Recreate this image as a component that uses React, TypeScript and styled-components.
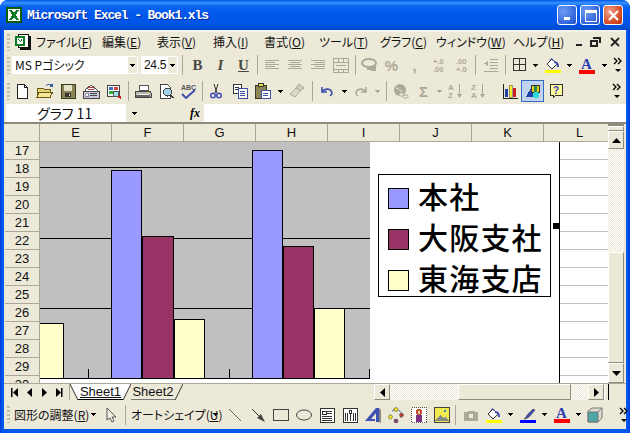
import React from "react";
import styled, { createGlobalStyle } from "styled-components";

const GlobalStyle = createGlobalStyle`
  html, body { margin: 0; padding: 0; background: #fff; }
  body { width: 630px; height: 433px; overflow: hidden; }
`;

const JP = `"Noto Sans CJK JP", "Liberation Sans", sans-serif`;
const FACE = "#ece9d8";
const LINE = "#aca899";
const OFF = "#aca899";

const Window = styled.div`
  width: 630px;
  height: 433px;
  box-sizing: border-box;
  display: flex;
  flex-direction: column;
  padding: 0 4px 4px;
  background: linear-gradient(90deg, #0831d9 0, #0058ee 2px, #0058ee 628px, #0831d9 630px);
  border-radius: 8px 8px 0 0;
  overflow: hidden;
  font-family: ${JP};
  font-feature-settings: "palt";
`;

const TitleBar = styled.div`
  height: 30px;
  margin: 0 -4px;
  padding: 0 7px 0 6px;
  flex: none;
  display: flex;
  align-items: center;
  background: linear-gradient(180deg, #0058e6 0, #3a93ff 3px, #0a65f0 6px, #0058ee 14px, #0055e5 24px, #0048c8 30px);
`;

const TitleText = styled.div`
  margin-left: 5px;
  flex: 1;
  color: #fff;
  font: bold 13px "Liberation Mono", monospace;
  letter-spacing: -1.1px;
  text-shadow: 1px 1px 0 #0f2f9a;
`;

const Caption = styled.div<{ $close?: boolean }>`
  width: 20px;
  height: 20px;
  margin-left: 3px;
  border: 1px solid #fff;
  border-radius: 3px;
  box-sizing: border-box;
  display: flex;
  align-items: center;
  justify-content: center;
  background: ${(p) =>
    p.$close
      ? "radial-gradient(circle at 30% 30%, #f0a088, #d8502c 60%, #b83010)"
      : "radial-gradient(circle at 30% 30%, #6f9cf5, #3a6de0 60%, #1f4fc8)"};
`;

const MenuBar = styled.div`
  height: 22px;
  flex: none;
  display: flex;
  align-items: center;
  background: ${FACE};
  border-top: 2px solid #f4f2e8;
  box-sizing: border-box;
  padding-left: 3px;
`;

const Grip = styled.span`
  width: 3px;
  height: 17px;
  flex: none;
  background: repeating-linear-gradient(180deg, #c1bda9 0 2px, transparent 2px 4px);
`;

const MenuItem = styled.span<{ $w: number }>`
  width: ${(p) => p.$w}px;
  flex: none;
  font-size: 12px;
  line-height: 16px;
  color: #111;
  white-space: nowrap;
  u { text-decoration: underline; }
`;

const DocControls = styled.span`
  margin-left: 16px;
  display: flex;
  gap: 3px;
  align-items: center;
  svg:last-child { margin-left: 4px; }
`;

const Toolbar = styled.div<{ $h: number }>`
  height: ${(p) => p.$h}px;
  flex: none;
  display: flex;
  align-items: center;
  background: ${FACE};
  padding-left: 3px;
  box-sizing: border-box;
`;

const Slot = styled.span<{ $w?: number; $hot?: boolean }>`
  width: ${(p) => p.$w ?? 23}px;
  height: 22px;
  flex: none;
  display: flex;
  align-items: center;
  justify-content: center;
  box-sizing: border-box;
  ${(p) => (p.$hot ? "background:#c1d2ee;border:1px solid #316ac5;" : "")}
`;

const Sep = styled.span<{ $l?: number; $r?: number }>`
  width: 1px;
  height: 20px;
  flex: none;
  background: ${LINE};
  margin-left: ${(p) => p.$l ?? 2}px;
  margin-right: ${(p) => p.$r ?? 2}px;
`;

const Combo = styled.div<{ $w: number; $l: number; $latin?: boolean }>`
  width: ${(p) => p.$w}px;
  height: 18px;
  margin-left: ${(p) => p.$l}px;
  flex: none;
  display: flex;
  background: #fff;
  box-sizing: border-box;
  font-size: 12px;
  line-height: 18px;
  color: #111;
  ${(p) => (p.$latin ? `font-family: "Liberation Sans", sans-serif; letter-spacing: -0.3px;` : "")}
`;

const ComboText = styled.span`
  flex: 1;
  padding-left: 3px;
  white-space: nowrap;
  overflow: hidden;
`;

const ComboArrow = styled.span`
  width: 11px;
  flex: none;
  background: ${FACE};
  border: 1px solid #fff;
  box-sizing: border-box;
  display: flex;
  align-items: center;
  justify-content: center;
`;

const StyleGlyph = styled.span<{ $i?: boolean; $u?: boolean }>`
  font: ${(p) => (p.$i ? "italic bold" : "bold")} 15px "Liberation Serif", serif;
  color: #4a4a44;
  text-decoration: ${(p) => (p.$u ? "underline" : "none")};
`;

const FormulaBar = styled.div`
  height: 20px;
  flex: none;
  display: flex;
  background: ${FACE};
  border-bottom: 2px solid #8f8b7c;
  box-sizing: border-box;
  padding-left: 2px;
`;

const NameBox = styled.div`
  width: 120px;
  background: #fff;
  font-size: 14px;
  line-height: 18px;
  padding-left: 31px;
  box-sizing: border-box;
  color: #111;
  white-space: nowrap;
`;

const NameDrop = styled.div`
  width: 78px;
  flex: none;
  display: flex;
  align-items: center;
  font: italic bold 12px "Liberation Serif", serif;
  padding-left: 6px;
  box-sizing: border-box;
  gap: 53px;
`;

const FormulaInput = styled.div`
  flex: 1;
  background: #fff;
`;

const Sheet = styled.div`
  height: 259px;
  flex: none;
  display: flex;
  background: ${FACE};
  padding-left: 1px;
`;

const GridArea = styled.div`
  width: 603px;
  flex: none;
  position: relative;
  overflow: hidden;
  background: #fff;
`;

const ColHeaders = styled.div`
  display: flex;
  height: 18px;
`;

const Corner = styled.div`
  width: 35px;
  flex: none;
  background: ${FACE};
  border-right: 1px solid ${LINE};
  border-bottom: 1px solid ${LINE};
  box-sizing: border-box;
`;

const ColHead = styled.div`
  width: 72px;
  flex: none;
  background: ${FACE};
  border-right: 1px solid ${LINE};
  border-bottom: 1px solid ${LINE};
  box-sizing: border-box;
  text-align: center;
  font: 13px/17px "Liberation Sans", sans-serif;
  color: #111;
`;

const Row = styled.div`
  display: flex;
  height: 18px;
  flex: none;
`;

const RowHead = styled.div`
  width: 35px;
  flex: none;
  background: ${FACE};
  border-right: 1px solid ${LINE};
  border-bottom: 1px solid ${LINE};
  box-sizing: border-box;
  text-align: center;
  font: 13px/18px "Liberation Sans", sans-serif;
  color: #111;
`;

const RowCells = styled.div`
  flex: 1;
  border-bottom: 1px solid #c0c0c0;
  box-sizing: border-box;
`;

const Chart = styled.div`
  position: absolute;
  left: 35px;
  top: 18px;
  width: 519px;
  height: 245px;
  background: #fff;
  border-right: 1px solid #000;
`;

const Legend = styled.div`
  position: absolute;
  left: 338px;
  top: 32px;
  width: 173px;
  height: 123px;
  border: 1px solid #000;
  box-sizing: border-box;
  background: #fff;
  padding: 3px 0 0 9px;
  display: flex;
  flex-direction: column;
  gap: 1px;
`;

const LegendRow = styled.div`
  height: 40px;
  display: flex;
  align-items: center;
  gap: 9px;
`;

const LegendLabel = styled.span`
  font-size: 30px;
  font-weight: 500;
  letter-spacing: 1.2px;
  color: #000;
  line-height: 34px;
  height: 40px;
  font-feature-settings: normal;
`;

const Swatch = styled.span<{ $c: string }>`
  width: 21px;
  height: 21px;
  flex: none;
  box-sizing: border-box;
  border: 1px solid #000;
  background: ${(p) => p.$c};
`;

const Handle = styled.span`
  position: absolute;
  right: 0;
  top: 81px;
  width: 6px;
  height: 6px;
  background: #000;
`;

const VScroll = styled.div`
  width: 16px;
  flex: none;
  display: flex;
  flex-direction: column;
  border-top: 2px solid #8f8b7c;
`;

const Dither = styled.div<{ $w?: number }>`
  flex: ${(p) => (p.$w ? "none" : 1)};
  width: ${(p) => (p.$w ? p.$w + "px" : "auto")};
  background: repeating-conic-gradient(#fdfcf8 0 25%, ${FACE} 0 50%) 0 0 / 2px 2px;
`;

const ScrollBtn = styled.div<{ $w?: number; $h?: number }>`
  width: ${(p) => (p.$w ? p.$w + "px" : "auto")};
  height: ${(p) => (p.$h ? p.$h + "px" : "auto")};
  flex: none;
  background: ${FACE};
  border: 1px solid;
  border-color: #fff #8f8b7c #8f8b7c #fff;
  box-sizing: border-box;
  display: flex;
  align-items: center;
  justify-content: center;
`;

const TabRow = styled.div`
  height: 17px;
  flex: none;
  display: flex;
  background: ${FACE};
  border-top: 1px solid ${LINE};
  box-sizing: border-box;
  padding-left: 2px;
`;

const TabNav = styled.div`
  width: 64px;
  flex: none;
  display: flex;
  align-items: center;
  justify-content: space-around;
  padding: 0 3px 0 2px;
  box-sizing: border-box;
  border-right: 1px solid ${LINE};
`;

const Tab = styled.div<{ $active?: boolean; $w: number }>`
  width: ${(p) => p.$w}px;
  flex: none;
  font: 13px/15px "Liberation Sans", sans-serif;
  color: #111;
  text-align: center;
  background: ${(p) => (p.$active ? "#fff" : FACE)};
  text-decoration: ${(p) => (p.$active ? "underline" : "none")};
  border-bottom: 1px solid ${(p) => (p.$active ? "#000" : "#777")};
  height: 16px;
  box-sizing: border-box;
`;

const TabFill = styled.div`
  width: 188px;
  flex: none;
`;

const Thumb = styled(ScrollBtn)`
  width: 113px;
`;

const HScroll = styled.div`
  display: flex;
  flex: none;
  width: 230px;
  margin-left: 3px;
`;

const Splitter = styled.div`
  width: 5px;
  flex: none;
  border-left: 1px solid #fff;
  border-right: 1px solid #000;
  box-sizing: border-box;
`;

const DrawLabel = styled.span<{ $w: number; $l?: number }>`
  width: ${(p) => p.$w}px;
  margin-left: ${(p) => p.$l ?? 0}px;
  flex: none;
  font-size: 12px;
  color: #111;
  white-space: nowrap;
`;

const Px: React.FC<{ w?: number; h?: number; smooth?: boolean; children: React.ReactNode }> = ({
  w = 16,
  h = 16,
  smooth,
  children,
}) => (
  <svg width={w} height={h} viewBox={`0 0 ${w} ${h}`} shapeRendering={smooth ? "auto" : "crispEdges"}>
    {children}
  </svg>
);

const Drop = () => (
  <Px w={5} h={3}>
    <path d="M0 0h5v1H4v1H3v1H2V2H1V1H0z" fill="#000" />
  </Px>
);

const Chevrons = () => (
  <svg width="9" height="16" viewBox="0 0 9 16">
    <path d="M1 1l3 3-3 3M5 1l3 3-3 3" fill="none" stroke="#000" strokeWidth="1.3" />
    <path d="M2 12h6l-3 3z" fill="#000" />
  </svg>
);

const Arrow: React.FC<{ dir: "l" | "r" | "u" | "d"; bar?: boolean }> = ({ dir, bar }) => {
  const paths = {
    l: "M7 0v9L2 4.5z",
    r: "M2 0v9l5-4.5z",
    u: "M0 7h9L4.5 2z",
    d: "M0 2h9L4.5 7z",
  };
  return (
    <svg width="9" height="9" viewBox="0 0 9 9">
      <path d={paths[dir]} fill="#000" />
      {bar && <rect x={dir === "l" ? 0 : 7} y="0" width="1.5" height="9" fill="#000" />}
    </svg>
  );
};

// the slanted sides of the sheet tabs
const TabEdge: React.FC<{ left: string; right: string; flip?: boolean }> = ({ left, right, flip }) => (
  <svg width="8" height="16" viewBox="0 0 8 16" style={{ flex: "none" }}>
    <rect width="8" height="16" fill={right} />
    <path d={flip ? "M0 16L8 0H0z" : "M0 0l8 16H0z"} fill={left} />
    <path d={flip ? "M0 16L8 0" : "M0 0l8 16"} stroke="#333" fill="none" />
  </svg>
);

const ExcelLogo = () => (
  <Px>
    <rect width="16" height="16" fill="#0b5c0b" />
    <rect x="2" y="2" width="12" height="12" fill="#fff" />
    <path d="M3 3h3l2 3 2-3h3l-3.5 5L13 13h-3L8 10l-2 3H3l3.5-5z" fill="#0b7a24" />
  </Px>
);

const DocIcon = () => (
  <Px w={18} h={16}>
    <path d="M4 0h11v2h2v14H6v-2H4z" fill="#111" />
    <path d="M5 1h9v12H5z" fill="#fff" />
    <rect x="1" y="2" width="10" height="10" fill="#0b7a24" />
    <rect x="3" y="4" width="6" height="6" fill="#fff" />
    <path d="M4 5h1v1h1v1H5zM7 5h1v2H7zM6 7h1v1H6z" fill="#0b7a24" />
  </Px>
);

const NewIcon = () => (
  <Px>
    <path d="M3 1h7l3 3v11H3z" fill="#fff" stroke="#222" />
    <path d="M10 1v3h3" fill="none" stroke="#222" />
  </Px>
);
const OpenIcon = () => (
  <Px w={18}>
    <path d="M1 5h6l1 1h6v8H1z" fill="#e8d47a" stroke="#6a5a10" />
    <path d="M3 9h14l-3 5H1z" fill="#f6e79a" stroke="#6a5a10" />
    <path d="M10 3c2-2 4-2 6 0" fill="none" stroke="#3f5f9f" />
    <path d="M15 1h2v3h-3z" fill="#3f5f9f" />
  </Px>
);
const SaveIcon = () => (
  <Px>
    <rect x="1" y="1" width="14" height="14" fill="#8a8456" stroke="#3a3a20" />
    <rect x="4" y="2" width="8" height="6" fill="#e6e2c8" />
    <rect x="5" y="10" width="6" height="4" fill="#333" />
    <rect x="9" y="11" width="1" height="2" fill="#ddd" />
  </Px>
);
const MailIcon = () => (
  <Px w={18}>
    <path d="M3 7l6-5 6 5v2H3z" fill="#fff" stroke="#555" />
    <path d="M6 4h6M6 6h6" stroke="#b04040" />
    <rect x="1" y="8" width="16" height="7" fill="#c8c8e0" stroke="#444" />
    <rect x="3" y="10" width="3" height="3" fill="#fff" stroke="#444" strokeWidth="0.5" />
    <path d="M8 10h7M8 12h7" stroke="#444" />
  </Px>
);
const SearchDocIcon = () => (
  <Px w={16}>
    <rect x="1" y="2" width="12" height="11" fill="#fff" stroke="#444" />
    <rect x="3" y="4" width="4" height="3" fill="#3c6cc4" />
    <rect x="8" y="4" width="4" height="3" fill="#c44" />
    <rect x="3" y="8" width="4" height="3" fill="#3a3" />
    <circle cx="10" cy="11" r="3" fill="#9fe0e8" stroke="#555" />
    <path d="M12 13l3 2" stroke="#c22" strokeWidth="2" />
  </Px>
);
const PrintIcon = () => (
  <Px w={18}>
    <path d="M5 2h9v5H5z" fill="#fff" stroke="#555" />
    <path d="M2 8h14l1 2v4H1v-4z" fill="#b8b8b0" stroke="#444" />
    <path d="M3 11h12" stroke="#eee" />
    <rect x="13" y="9" width="2" height="1" fill="#ee3" />
    <rect x="2" y="12" width="14" height="2" fill="#666" />
  </Px>
);
const PreviewIcon = () => (
  <Px>
    <path d="M2 1h7l3 3v11H2z" fill="#fff" stroke="#444" />
    <circle cx="9.5" cy="9" r="4" fill="#9fd4e8" stroke="#444" />
    <path d="M12.5 12l3 3" stroke="#333" strokeWidth="2" />
  </Px>
);
const SpellIcon = () => (
  <svg width="17" height="16" viewBox="0 0 17 16">
    <text x="1" y="7" fontFamily="Liberation Sans" fontSize="7" fontWeight="bold" fill="#555">ABC</text>
    <path d="M2 11l4 4 9-8" fill="none" stroke="#3f4fb0" strokeWidth="2" />
  </svg>
);
const CutIcon = () => (
  <Px smooth>
    <path d="M6 1l3 9M10 1L7 10" stroke="#333" fill="none" />
    <circle cx="5" cy="12.5" r="2.3" fill="none" stroke="#3f4fb0" strokeWidth="1.5" />
    <circle cx="11" cy="12.5" r="2.3" fill="none" stroke="#3f4fb0" strokeWidth="1.5" />
  </Px>
);
const CopyIcon = () => (
  <Px>
    <rect x="1" y="1" width="8" height="9" fill="#fff" stroke="#333" />
    <path d="M3 4h4M3 6h4" stroke="#333" />
    <rect x="6" y="5" width="9" height="10" fill="#fff" stroke="#3f4fa0" />
    <path d="M8 8h5M8 10h5M8 12h5" stroke="#3f4fa0" />
  </Px>
);
const PasteIcon = () => (
  <Px w={17}>
    <rect x="1" y="2" width="11" height="13" fill="#8a8456" stroke="#3a3a20" />
    <rect x="4" y="0" width="5" height="3" fill="#e6e040" stroke="#333" />
    <rect x="7" y="7" width="9" height="8" fill="#fff" stroke="#3f4fa0" />
    <path d="M9 10h5M9 12h5" stroke="#3f4fa0" />
  </Px>
);
const BrushIcon = () => (
  <Px w={17} smooth>
    <path d="M10 1l5 4-4 3-4-3z" fill="#cfcbb8" stroke={OFF} />
    <path d="M7 5l4 3-5 6-5-3z" fill="#dcd8c6" stroke={OFF} />
  </Px>
);
const UndoIcon = () => (
  <Px w={14} h={12} smooth>
    <path d="M2 2v5h5" fill="none" stroke="#3f4fb0" strokeWidth="1.6" />
    <path d="M2 7c3-4 9-4 10 1 0 1-1 2-2 3" fill="none" stroke="#3f4fb0" strokeWidth="1.6" />
  </Px>
);
const RedoIcon = () => (
  <Px w={14} h={12} smooth>
    <path d="M12 2v5H7" fill="none" stroke={OFF} strokeWidth="1.6" />
    <path d="M12 7C9 3 3 3 2 8c0 1 1 2 2 3" fill="none" stroke={OFF} strokeWidth="1.6" />
  </Px>
);
const GlobeIcon = () => (
  <Px smooth>
    <circle cx="7" cy="7" r="6" fill={OFF} />
    <path d="M3 5c3 0 3 3 5 3s1 3 0 4" stroke={FACE} fill="none" />
    <rect x="6" y="10" width="5" height="3" rx="1.5" fill={FACE} stroke={OFF} />
    <rect x="10" y="12" width="5" height="3" rx="1.5" fill={FACE} stroke={OFF} />
  </Px>
);
const DimText = styled.span<{ $size?: number; $c?: string }>`
  font: bold ${(p) => p.$size ?? 14}px "Liberation Sans", sans-serif;
  color: ${(p) => p.$c ?? OFF};
`;
const SortIcon: React.FC<{ top: string; bottom: string }> = ({ top, bottom }) => (
  <svg width="16" height="16" viewBox="0 0 16 16">
    <text x="0" y="7" fontFamily="Liberation Sans" fontWeight="bold" fontSize="8" fill={OFF}>{top}</text>
    <text x="0" y="15" fontFamily="Liberation Sans" fontWeight="bold" fontSize="8" fill={OFF}>{bottom}</text>
    <path d="M11 1h1v10h2l-2.5 4L9 11h2z" fill={OFF} />
  </svg>
);
const ChartIcon = () => (
  <Px>
    <path d="M1 1v14h15" fill="none" stroke="#222" />
    <rect x="3" y="6" width="3" height="8" fill="#223fae" />
    <rect x="7" y="2" width="3" height="12" fill="#ee3" stroke="#444" strokeWidth="0.5" />
    <rect x="11" y="5" width="3" height="9" fill="#c22" />
  </Px>
);
const WizardIcon = () => (
  <Px>
    <path d="M1 14L6 5h2v9z" fill="#2340a8" />
    <rect x="6" y="2" width="8" height="7" fill="#e8d020" stroke="#333" />
    <rect x="9" y="3" width="3" height="9" fill="#2a8a4a" />
    <circle cx="11" cy="12" r="3" fill="#30d8d8" />
  </Px>
);
const HelpIcon = () => (
  <svg width="16" height="16" viewBox="0 0 16 16">
    <path d="M2 1h12v11H8l-3 3v-3H2z" fill="#ffff99" stroke="#333" shapeRendering="crispEdges" />
    <text x="5" y="10.5" fontFamily="Liberation Sans" fontWeight="bold" fontSize="10" fill="#3a3ac0">?</text>
  </svg>
);
const AlignIcon: React.FC<{ mode: "l" | "c" | "r" }> = ({ mode }) => {
  const lines = [14, 10, 14, 10, 14];
  return (
    <Px h={12}>
      {lines.map((w, i) => (
        <rect
          key={i}
          x={mode === "l" ? 1 : mode === "c" ? 8 - w / 2 : 15 - w}
          y={i * 2 + 1}
          width={w}
          height="1"
          fill={OFF}
        />
      ))}
    </Px>
  );
};
const MergeIcon = () => (
  <Px h={15}>
    <rect x="0.5" y="0.5" width="15" height="14" fill="none" stroke={OFF} />
    <path d="M0 4h16M0 11h16M5 0v4M10 0v4M5 11v4M10 11v4" stroke={OFF} />
    <path d="M3 7h10" stroke={OFF} />
  </Px>
);
const MoneyIcon = () => (
  <Px w={16} h={15} smooth>
    <ellipse cx="8" cy="5" rx="7" ry="4" fill="none" stroke={OFF} strokeWidth="2" />
    <rect x="6" y="10" width="6" height="2" fill={OFF} />
    <rect x="10" y="8" width="5" height="5" fill={OFF} />
  </Px>
);
const DecIcon: React.FC<{ a: string; b: string }> = ({ a, b }) => (
  <svg width="16" height="16" viewBox="0 0 16 16">
    <text x="3" y="7" fontFamily="Liberation Sans" fontWeight="bold" fontSize="7.5" fill={OFF}>{a}</text>
    <text x="3" y="15" fontFamily="Liberation Sans" fontWeight="bold" fontSize="7.5" fill={OFF}>{b}</text>
  </svg>
);
const IndentIcon = () => (
  <Px>
    <path d="M7 2h8v1H7zM7 5h8v1H7zM7 8h8v1H7zM7 11h8v1H7zM1 14h14v1H1z" fill={OFF} />
    <path d="M5 4v5L1 6.5z" fill={OFF} />
  </Px>
);
const BordersIcon = () => (
  <Px>
    <rect x="1.5" y="1.5" width="12" height="12" fill="none" stroke="#333" />
    <path d="M7.5 1v12M1 7.5h12" stroke="#333" fill="none" />
  </Px>
);
const FillIcon: React.FC<{ bar: string }> = ({ bar }) => (
  <Px w={17} smooth>
    <path d="M3 7l5-5 5 5-5 5z" fill="#fff" stroke="#333" />
    <path d="M6 4c0-3 3-3 3 0" fill="none" stroke="#3f4fb0" />
    <path d="M10 5c3 0 4 2 4 5" stroke="#3f4fb0" strokeWidth="2" fill="none" />
    <rect x="1" y="13" width="16" height="3" fill={bar} />
  </Px>
);
const FontColorIcon: React.FC<{ bar: string }> = ({ bar }) => (
  <svg width="17" height="17" viewBox="0 0 17 17">
    <text x="8.5" y="12" textAnchor="middle" fontFamily="Liberation Serif" fontWeight="bold" fontSize="15" fill="#2b3fb0">A</text>
    <rect x="1" y="13" width="16" height="4" fill={bar} />
  </svg>
);
const LineColorIcon = () => (
  <Px w={17} smooth>
    <path d="M5 12c2-1 2-3 4-5l5-5 2 1-5 6c-2 2-4 3-6 3z" fill="#3f4fb0" stroke="#223" strokeWidth="0.5" />
    <rect x="1" y="13" width="16" height="4" fill="#0000ff" />
  </Px>
);
const PointerIcon = () => (
  <Px w={12}>
    <path d="M2 1v12l3-2 2 4 2-1-2-4h4z" fill="#f4f2e8" stroke="#555" shapeRendering="auto" />
  </Px>
);
const LineIcon = () => (
  <Px smooth>
    <path d="M2 2l12 12" stroke="#666" />
  </Px>
);
const ArrowLineIcon = () => (
  <Px smooth>
    <path d="M2 2l8 8" stroke="#333" />
    <path d="M7 11l4-4 4 8z" fill="#444" />
  </Px>
);
const RectIcon = () => (
  <Px>
    <rect x="0.5" y="2.5" width="15" height="11" fill="none" stroke="#444" />
  </Px>
);
const EllipseIcon = () => (
  <Px smooth>
    <ellipse cx="8" cy="8" rx="7.5" ry="5" fill="none" stroke="#444" />
  </Px>
);
const TextBoxIcon = () => (
  <Px>
    <rect x="1" y="1" width="14" height="14" fill="#fff" stroke="#333" />
    <path d="M3 4h4v3H3zM8 4h5M8 6h5M3 9h10M3 11h10M3 13h10" stroke="#333" fill="none" />
  </Px>
);
const VTextIcon = () => (
  <Px>
    <rect x="1" y="1" width="14" height="14" fill="#fff" stroke="#333" />
    <path d="M3 6v8M5 6v8M7 3h2v3H7zM8 7v7M11 6v8M13 6v8" stroke="#333" fill="none" />
  </Px>
);
const WordArtIcon = () => (
  <Px smooth>
    <path d="M0 14L11 1h3v14h-3V6l-5 6h4v2z" fill="#3d52b0" />
    <path d="M14 1l2 2v13l-2-1z" fill="#888" />
  </Px>
);
const DiagramIcon = () => (
  <Px smooth>
    <circle cx="8" cy="8" r="5.5" fill="none" stroke="#3f4fb0" strokeDasharray="3 4" />
    <circle cx="8" cy="2.5" r="2" fill="#f0e020" stroke="#444" strokeWidth="0.5" />
    <circle cx="2.5" cy="10" r="2" fill="#f0e020" stroke="#444" strokeWidth="0.5" />
    <circle cx="13.5" cy="8" r="2" fill="#c04040" stroke="#444" strokeWidth="0.5" />
    <circle cx="8" cy="14" r="2" fill="#804080" stroke="#444" strokeWidth="0.5" />
  </Px>
);
const ClipIcon = () => (
  <Px>
    <rect x="0.5" y="0.5" width="15" height="15" fill="#fff" stroke="#555" strokeDasharray="1 1" />
    <circle cx="8" cy="5" r="3" fill="#c05030" />
    <rect x="5" y="8" width="6" height="7" fill="#803080" />
    <rect x="7" y="4" width="2" height="3" fill="#f0c0a0" />
  </Px>
);
const PictureIcon = () => (
  <Px>
    <rect x="0.5" y="0.5" width="15" height="15" fill="#f0ec50" stroke="#444" />
    <path d="M1 14l5-6 3 3 2-2 4 5z" fill="#888" />
    <circle cx="11" cy="4" r="1.5" fill="#3f7fc0" />
  </Px>
);
const CameraIcon = () => (
  <Px h={12}>
    <path d="M1 3h3l1-1h6l1 1h3v9H1z" fill={OFF} />
    <circle cx="8" cy="7" r="2.5" fill={FACE} />
  </Px>
);
const BoxIcon = () => (
  <Px smooth>
    <path d="M1 4l4-3h10v10l-4 4H1z" fill="#dcdcd0" stroke="#777" />
    <path d="M1 5h10v10H1z" fill="#4ea5a5" stroke="#777" />
    <path d="M11 5l4-4" stroke="#777" />
  </Px>
);

const COLS = ["E", "F", "G", "H", "I", "J", "K", "L"];
const ROWS = Array.from({ length: 14 }, (_, i) => 17 + i);

// x, top, width of each bar (in chart pixels, bottom is the axis)
const BARS = [
  { x: -2, top: 181, w: 26, c: "#ffffcc" },
  { x: 71, top: 28, w: 31, c: "#9999ff" },
  { x: 102, top: 94, w: 32, c: "#993366" },
  { x: 134, top: 177, w: 31, c: "#ffffcc" },
  { x: 212, top: 8, w: 31, c: "#9999ff" },
  { x: 243, top: 104, w: 31, c: "#993366" },
  { x: 274, top: 166, w: 31, c: "#ffffcc" },
];
const AXIS = 236;

const Plot = () => (
  <svg width="330" height="245" viewBox="0 0 330 245" shapeRendering="crispEdges" style={{ display: "block" }}>
    <rect width="330" height={AXIS} fill="#c0c0c0" />
    {[25, 96, 166].map((y) => (
      <rect key={y} y={y} width="330" height="1" fill="#000" />
    ))}
    <rect x="48" y="227" width="1" height="9" fill="#000" />
    <rect x="189" y="227" width="1" height="9" fill="#000" />
    <rect x="329" y="227" width="1" height="9" fill="#000" />
    {BARS.map((b) => (
      <rect
        key={b.x}
        x={b.x + 0.5}
        y={b.top + 0.5}
        width={b.w - 1}
        height={AXIS - b.top}
        fill={b.c}
        stroke="#000"
      />
    ))}
    <rect y={AXIS} width="330" height="1" fill="#000" />
    <rect y={AXIS + 1} width="330" height="8" fill="#fff" />
  </svg>
);

const App = () => (
  <>
    <GlobalStyle />
    <Window>
      <TitleBar>
        <ExcelLogo />
        <TitleText>Microsoft Excel - Book1.xls</TitleText>
        <Caption>
          <Px w={9} h={9}>
            <rect x="1" y="6" width="6" height="3" fill="#fff" />
          </Px>
        </Caption>
        <Caption>
          <Px w={13} h={13}>
            <path d="M1 1h11v11H1z" fill="none" stroke="#fff" />
            <rect x="1" y="1" width="11" height="3" fill="#fff" />
          </Px>
        </Caption>
        <Caption $close>
          <svg width="13" height="13" viewBox="0 0 13 13">
            <path d="M2 2l9 9M11 2l-9 9" stroke="#fff" strokeWidth="2.2" />
          </svg>
        </Caption>
      </TitleBar>

      <MenuBar>
        <Grip />
        <Slot $w={26}>
          <DocIcon />
        </Slot>
        <MenuItem $w={66}>ファイル(<u>F</u>)</MenuItem>
        <MenuItem $w={55}>編集(<u>E</u>)</MenuItem>
        <MenuItem $w={56}>表示(<u>V</u>)</MenuItem>
        <MenuItem $w={51}>挿入(<u>I</u>)</MenuItem>
        <MenuItem $w={55}>書式(<u>O</u>)</MenuItem>
        <MenuItem $w={61}>ツール(<u>T</u>)</MenuItem>
        <MenuItem $w={56}>グラフ(<u>C</u>)</MenuItem>
        <MenuItem $w={77}>ウィンドウ(<u>W</u>)</MenuItem>
        <MenuItem $w={44}>ヘルプ(<u>H</u>)</MenuItem>
        <DocControls>
          <Px w={13} h={10}>
            <rect x="3" y="7" width="6" height="2" fill="#222" />
          </Px>
          <Px w={13} h={10}>
            <path d="M4 0h8v6h-2V2H4zM1 3h8v7H1zM3 5v3h4V5z" fill="#222" fillRule="evenodd" />
          </Px>
          <Px w={13} h={10} smooth>
            <path d="M2 1l8 8M10 1l-8 8" stroke="#222" strokeWidth="1.8" />
          </Px>
        </DocControls>
      </MenuBar>

      <Toolbar $h={26}>
        <Grip />
        <Combo $w={126} $l={2}>
          <ComboText>MS Pゴシック</ComboText>
          <ComboArrow>
            <Drop />
          </ComboArrow>
        </Combo>
        <Combo $w={37} $l={3} $latin>
          <ComboText>24.5</ComboText>
          <ComboArrow>
            <Drop />
          </ComboArrow>
        </Combo>
        <Sep $l={4} $r={3} />
        <Slot><StyleGlyph>B</StyleGlyph></Slot>
        <Slot><StyleGlyph $i>I</StyleGlyph></Slot>
        <Slot><StyleGlyph $u>U</StyleGlyph></Slot>
        <Sep $l={2} $r={2} />
        <Slot><AlignIcon mode="l" /></Slot>
        <Slot><AlignIcon mode="c" /></Slot>
        <Slot><AlignIcon mode="r" /></Slot>
        <Slot><MergeIcon /></Slot>
        <Sep $l={3} $r={1} />
        <Slot><MoneyIcon /></Slot>
        <Slot><DimText $size={15}>%</DimText></Slot>
        <Slot><DimText $size={15}>,</DimText></Slot>
        <Slot><DecIcon a="+.0" b=".00" /></Slot>
        <Slot><DecIcon a=".00" b="+.0" /></Slot>
        <Sep $l={3} $r={3} />
        <Slot><IndentIcon /></Slot>
        <Sep $l={3} $r={2} />
        <Slot><BordersIcon /></Slot>
        <Slot $w={9}><Drop /></Slot>
        <Slot $w={25}><FillIcon bar="#ffff00" /></Slot>
        <Slot $w={9}><Drop /></Slot>
        <Slot $w={24}><FontColorIcon bar="#ff0000" /></Slot>
        <Slot $w={12}><Drop /></Slot>
        <Slot $w={14}><Chevrons /></Slot>
      </Toolbar>

      <Toolbar $h={26}>
        <Grip />
        <Slot><NewIcon /></Slot>
        <Slot><OpenIcon /></Slot>
        <Slot><SaveIcon /></Slot>
        <Slot><MailIcon /></Slot>
        <Slot><SearchDocIcon /></Slot>
        <Sep $l={3} $r={2} />
        <Slot><PrintIcon /></Slot>
        <Slot><PreviewIcon /></Slot>
        <Slot><SpellIcon /></Slot>
        <Sep $l={2} $r={1} />
        <Slot $w={24}><CutIcon /></Slot>
        <Slot><CopyIcon /></Slot>
        <Slot><PasteIcon /></Slot>
        <Slot $w={12}><Drop /></Slot>
        <Slot><BrushIcon /></Slot>
        <Sep $l={3} $r={2} />
        <Slot $w={24}><UndoIcon /></Slot>
        <Slot $w={11}><Drop /></Slot>
        <Slot $w={22}><RedoIcon /></Slot>
        <Slot $w={11}>
          <Px w={5} h={3}><path d="M0 0h5v1H4v1H3v1H2V2H1V1H0z" fill={OFF} /></Px>
        </Slot>
        <Sep $l={3} $r={2} />
        <Slot><GlobeIcon /></Slot>
        <Slot><DimText $size={15}>Σ</DimText></Slot>
        <Slot $w={9}>
          <Px w={5} h={3}><path d="M0 0h5v1H4v1H3v1H2V2H1V1H0z" fill={OFF} /></Px>
        </Slot>
        <Slot><SortIcon top="A" bottom="Z" /></Slot>
        <Slot><SortIcon top="Z" bottom="A" /></Slot>
        <Slot $w={8} />
        <Slot><ChartIcon /></Slot>
        <Slot $hot><WizardIcon /></Slot>
        <Slot><HelpIcon /></Slot>
        <Slot $w={42} />
        <Slot $w={14}><Chevrons /></Slot>
      </Toolbar>

      <FormulaBar>
        <NameBox>グラフ 11</NameBox>
        <NameDrop>
          <Drop />
          <span>fx</span>
        </NameDrop>
        <FormulaInput />
      </FormulaBar>

      <Sheet>
        <GridArea>
          <ColHeaders>
            <Corner />
            {COLS.map((c) => (
              <ColHead key={c}>{c}</ColHead>
            ))}
          </ColHeaders>
          {ROWS.map((r) => (
            <Row key={r}>
              <RowHead>{r}</RowHead>
              <RowCells />
            </Row>
          ))}
          <Chart>
            <Plot />
            <Legend>
              <LegendRow>
                <Swatch $c="#9999ff" />
                <LegendLabel>本社</LegendLabel>
              </LegendRow>
              <LegendRow>
                <Swatch $c="#993366" />
                <LegendLabel>大阪支社</LegendLabel>
              </LegendRow>
              <LegendRow>
                <Swatch $c="#ffffcc" />
                <LegendLabel>東海支店</LegendLabel>
              </LegendRow>
            </Legend>
            <Handle />
          </Chart>
        </GridArea>
        <VScroll>
          <ScrollBtn $h={5} />
          <ScrollBtn $h={18}><Arrow dir="u" /></ScrollBtn>
          <Dither />
          <ScrollBtn $h={111} />
          <ScrollBtn $h={20}><Arrow dir="d" /></ScrollBtn>
        </VScroll>
      </Sheet>

      <TabRow>
        <TabNav>
          <Arrow dir="l" bar />
          <Arrow dir="l" />
          <Arrow dir="r" />
          <Arrow dir="r" bar />
        </TabNav>
        <TabEdge left={FACE} right="#fff" />
        <Tab $active $w={45}>Sheet1</Tab>
        <TabEdge left="#fff" right={FACE} flip />
        <Tab $w={44}>Sheet2</Tab>
        <TabEdge left={FACE} right={FACE} flip />
        <TabFill />
        <HScroll>
          <ScrollBtn $w={16}><Arrow dir="l" /></ScrollBtn>
          <Dither />
          <Thumb />
          <Dither $w={17} />
          <ScrollBtn $w={16}><Arrow dir="r" /></ScrollBtn>
        </HScroll>
        <Splitter />
      </TabRow>

      <Toolbar $h={29}>
        <Grip />
        <DrawLabel $w={73} $l={4}>図形の調整(<u>R</u>)</DrawLabel>
        <Slot $w={12}><Drop /></Slot>
        <Slot $w={23}><PointerIcon /></Slot>
        <Sep $l={3} $r={5} />
        <DrawLabel $w={77}>オートシェイプ(<u>U</u>)</DrawLabel>
        <Slot $w={15}><Drop /></Slot>
        <Slot><LineIcon /></Slot>
        <Slot><ArrowLineIcon /></Slot>
        <Slot><RectIcon /></Slot>
        <Slot><EllipseIcon /></Slot>
        <Slot><TextBoxIcon /></Slot>
        <Slot><VTextIcon /></Slot>
        <Slot><WordArtIcon /></Slot>
        <Slot><DiagramIcon /></Slot>
        <Slot><ClipIcon /></Slot>
        <Slot><PictureIcon /></Slot>
        <Sep $l={2} $r={3} />
        <Slot><CameraIcon /></Slot>
        <Slot><FillIcon bar="#ffff00" /></Slot>
        <Slot $w={10}><Drop /></Slot>
        <Slot $w={24}><LineColorIcon /></Slot>
        <Slot $w={10}><Drop /></Slot>
        <Slot $w={24}><FontColorIcon bar="#ff0000" /></Slot>
        <Slot $w={10}><Drop /></Slot>
        <Slot><BoxIcon /></Slot>
        <Slot $w={10} />
        <Slot $w={14}><Chevrons /></Slot>
      </Toolbar>
    </Window>
  </>
);

export default App;
